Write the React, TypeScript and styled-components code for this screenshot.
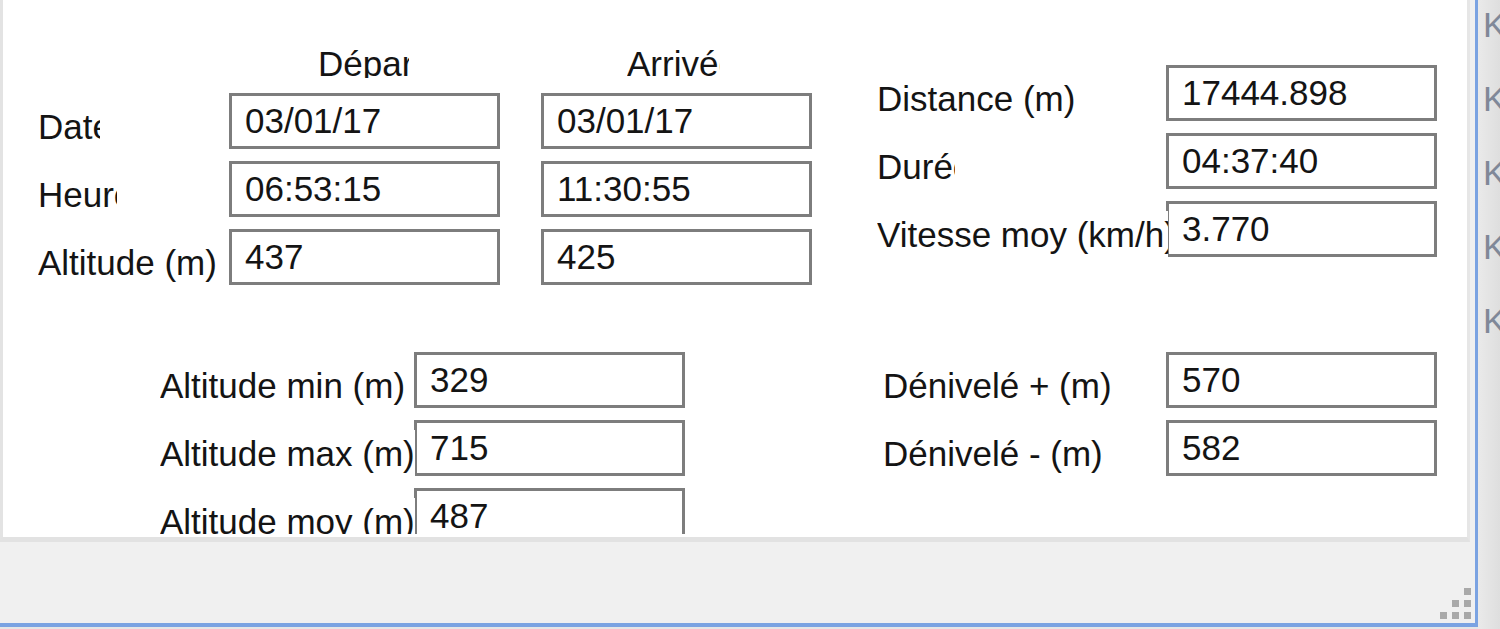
import React from "react";
import styled, { createGlobalStyle } from "styled-components";

const GlobalStyle = createGlobalStyle`
  html, body {
    margin: 0;
    padding: 0;
    background: #e6e6e6;
    overflow: hidden;
  }
  #root {
    width: 1500px;
    height: 629px;
  }
`;

const Screen = styled.div`
  display: flex;
  width: 1500px;
  height: 629px;
  overflow: hidden;
  background: #e6e6e6;
  font-family: "Liberation Sans", Arial, sans-serif;
  font-size: 35px;
  color: #141414;
`;

const Window = styled.div`
  display: flex;
  flex-direction: column;
  flex-shrink: 0;
  width: 1478px;
  height: 627px;
  box-sizing: border-box;
  background: #f0f0f0;
  border-right: 3px solid #7ba3e2;
  border-bottom: 4px solid #7ba3e2;
`;

const Panel = styled.div`
  flex-shrink: 0;
  width: 1470px;
  height: 542px;
  box-sizing: border-box;
  background: #ffffff;
  border-left: 3px solid #e3e3e3;
  border-right: 3px solid #e6e6e6;
  border-bottom: 5px solid #e2e2e2;
`;

const Content = styled.div`
  display: flex;
  flex-direction: column;
  height: 534px;
  box-sizing: border-box;
  padding: 44px 0 0 35px;
  overflow: hidden;
`;

const Section = styled.div<{ $mt?: number }>`
  display: flex;
  align-items: flex-start;
  margin-top: ${(p) => p.$mt ?? 0}px;
`;

const Group = styled.div<{ $ml?: number; $mt?: number }>`
  display: flex;
  flex-direction: column;
  flex-shrink: 0;
  gap: 12px;
  margin-left: ${(p) => p.$ml ?? 0}px;
  margin-top: ${(p) => p.$mt ?? 0}px;
`;

const HeaderRow = styled.div`
  display: flex;
  height: 34px;
  margin-bottom: 3px;
`;

const ColumnTitle = styled.div<{ $ml: number; $w: number }>`
  flex-shrink: 0;
  margin-left: ${(p) => p.$ml}px;
  width: ${(p) => p.$w}px;
  height: 34px;
  line-height: 40px;
  white-space: nowrap;
  overflow: hidden;
`;

const FieldRow = styled.div`
  display: flex;
  align-items: flex-start;
  height: 56px;
`;

const LabelCell = styled.div<{ $w: number }>`
  flex-shrink: 0;
  width: ${(p) => p.$w}px;
  padding-top: 10px;
  box-sizing: border-box;
`;

const Label = styled.div<{ $clip?: number }>`
  position: relative;
  z-index: 1;
  width: ${(p) => (p.$clip ? `${p.$clip}px` : "max-content")};
  height: 46px;
  box-sizing: border-box;
  padding-top: 4px;
  line-height: 40px;
  white-space: nowrap;
  overflow: hidden;
  background: #ffffff;
`;

const TextBox = styled.input<{ $ml?: number }>`
  flex-shrink: 0;
  width: 271px;
  height: 56px;
  box-sizing: border-box;
  margin: 0 0 0 ${(p) => p.$ml ?? 0}px;
  padding: 0 0 0 13px;
  border: 3px solid #7d7d7d;
  border-radius: 0;
  background: #ffffff;
  font-family: inherit;
  font-size: inherit;
  color: #141414;
  outline: none;
`;

const StatusBar = styled.div`
  flex: 1;
  display: flex;
  justify-content: flex-end;
  align-items: flex-end;
  padding: 0 4px 4px 0;
`;

const SideStrip = styled.div`
  flex: 1;
  display: flex;
  flex-direction: column;
  padding: 5px 0 0 5px;
  background: linear-gradient(to right, #eaeaea, #dedede);
  overflow: hidden;
`;

const SideItem = styled.div`
  height: 74px;
  line-height: 40px;
  color: #808898;
  white-space: nowrap;
`;

type Field = { label: string; clip?: number; values: string[] };

const topLeft: Field[] = [
  { label: "Date", clip: 62, values: ["03/01/17", "03/01/17"] },
  { label: "Heure", clip: 79, values: ["06:53:15", "11:30:55"] },
  { label: "Altitude (m)", values: ["437", "425"] },
];

const topRight: Field[] = [
  { label: "Distance (m)", values: ["17444.898"] },
  { label: "Durée", clip: 78, values: ["04:37:40"] },
  { label: "Vitesse moy (km/h)", clip: 291, values: ["3.770"] },
];

const bottomLeft: Field[] = [
  { label: "Altitude min (m)", values: ["329"] },
  { label: "Altitude max (m)", values: ["715"] },
  { label: "Altitude moy (m)", values: ["487"] },
];

const bottomRight: Field[] = [
  { label: "Dénivelé + (m)", values: ["570"] },
  { label: "Dénivelé - (m)", values: ["582"] },
];

function Rows({ fields, col }: { fields: Field[]; col: number }) {
  return (
    <>
      {fields.map((f) => (
        <FieldRow key={f.label}>
          <LabelCell $w={col}>
            <Label $clip={f.clip}>{f.label}</Label>
          </LabelCell>
          {f.values.map((v, i) => (
            <TextBox key={i} readOnly value={v} $ml={i === 0 ? 0 : 41} />
          ))}
        </FieldRow>
      ))}
    </>
  );
}

function Grip() {
  const dots = [
    [24, 0],
    [12, 12],
    [24, 12],
    [0, 24],
    [12, 24],
    [24, 24],
  ];
  return (
    <svg width="31" height="31" viewBox="0 0 31 31">
      {dots.map(([x, y]) => (
        <rect key={`${x}-${y}`} x={x} y={y} width="7" height="7" fill="#a9a9a9" />
      ))}
    </svg>
  );
}

export default function App() {
  return (
    <>
      <GlobalStyle />
      <Screen>
        <Window>
          <Panel>
            <Content>
              <Section>
                <Group>
                  <HeaderRow>
                    <ColumnTitle $ml={280} $w={91}>
                      Départ
                    </ColumnTitle>
                    <ColumnTitle $ml={218} $w={93}>
                      Arrivée
                    </ColumnTitle>
                  </HeaderRow>
                  <Rows fields={topLeft} col={191} />
                </Group>
                <Group $ml={65} $mt={21}>
                  <Rows fields={topRight} col={289} />
                </Group>
              </Section>
              <Section $mt={67}>
                <Group $ml={122}>
                  <Rows fields={bottomLeft} col={254} />
                </Group>
                <Group $ml={198}>
                  <Rows fields={bottomRight} col={283} />
                </Group>
              </Section>
            </Content>
          </Panel>
          <StatusBar>
            <Grip />
          </StatusBar>
        </Window>
        <SideStrip>
          {["K", "K", "K", "K", "K"].map((k, i) => (
            <SideItem key={i}>{k}</SideItem>
          ))}
        </SideStrip>
      </Screen>
    </>
  );
}
